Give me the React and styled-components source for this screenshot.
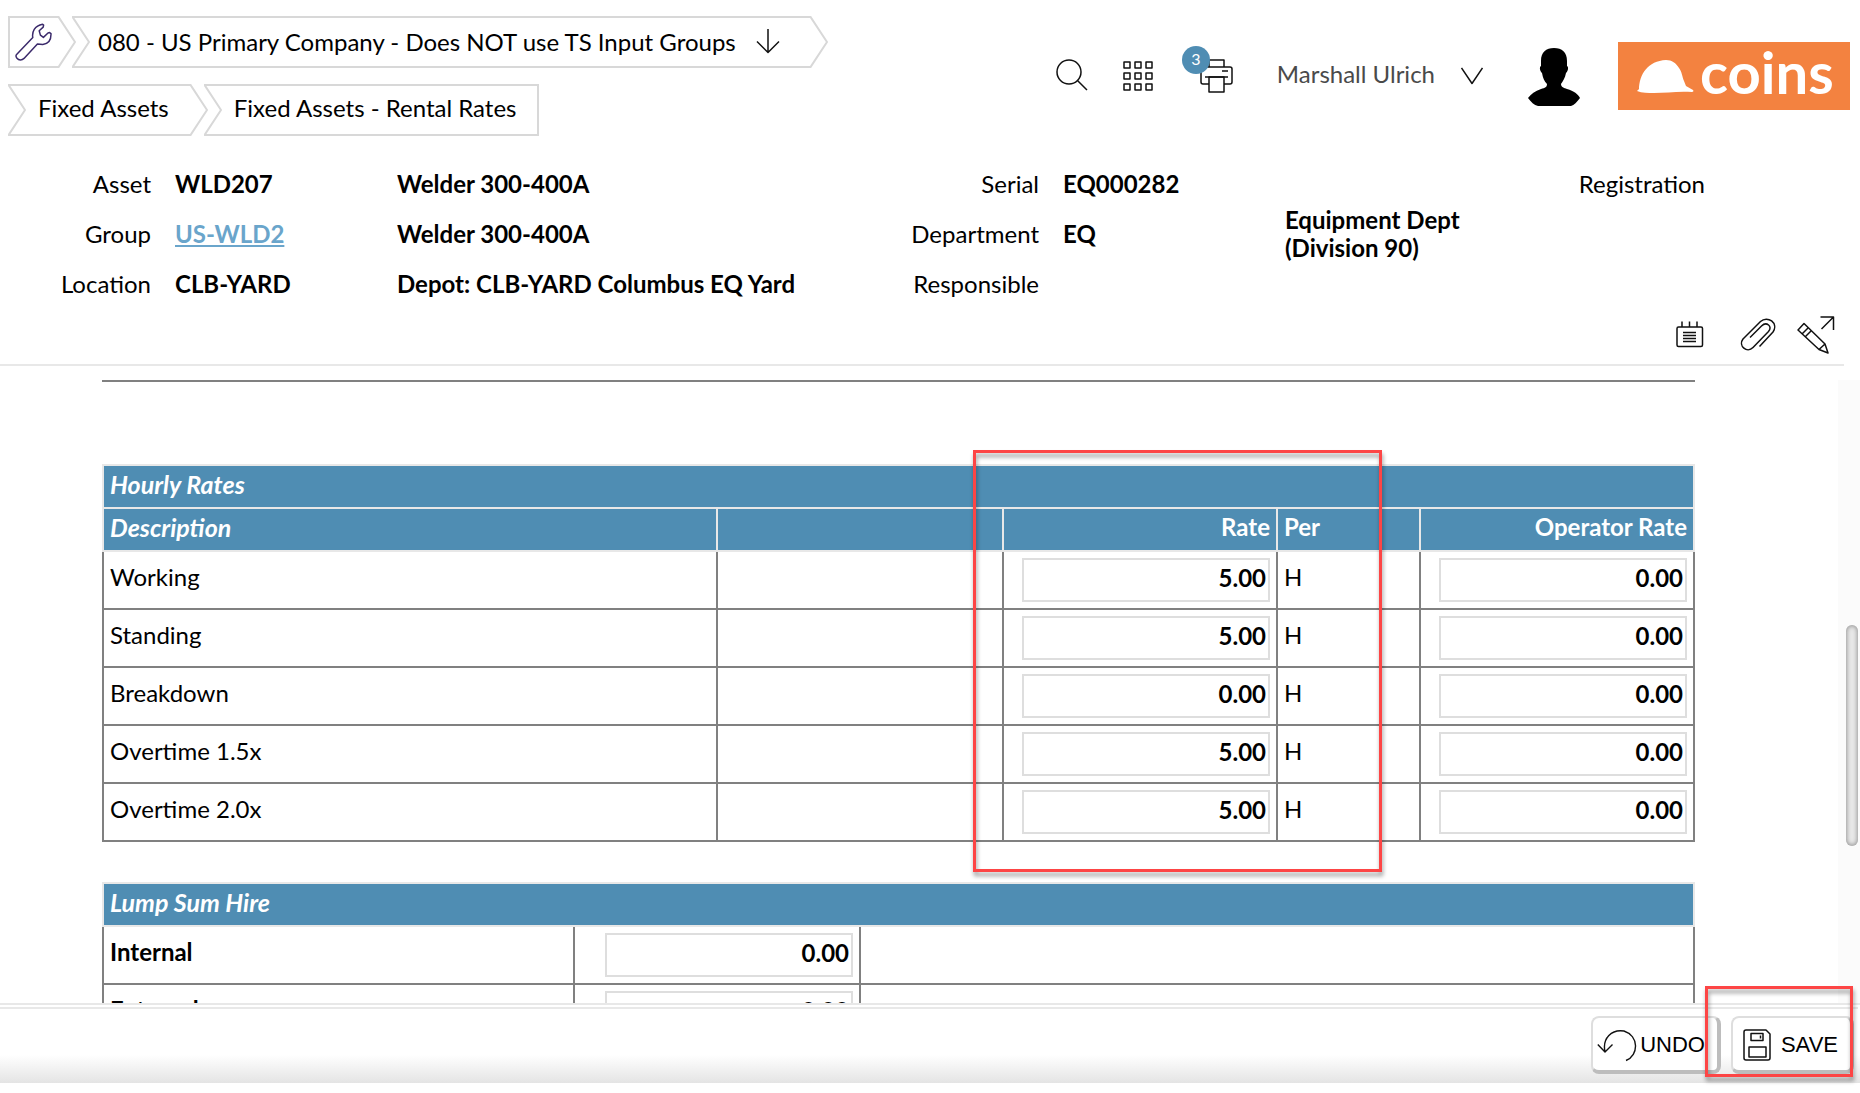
import React from "react";
import styled, { createGlobalStyle } from "styled-components";

const BLUE = "#4f8db3";
const LINE = "#e8e8e8";
const GRID = "#808080";

const GlobalStyle = createGlobalStyle`
  *, *::before, *::after { box-sizing: border-box; }
  body {
    margin: 0;
    background: #fff;
    color: #000;
    font-family: Lato, "Open Sans", sans-serif;
    font-size: 24px;
    line-height: 28px;
  }
  button, input { font: inherit; color: inherit; }
`;

const Shell = styled.div`
  display: flex;
  flex-direction: column;
  height: 100vh;
  padding-bottom: 10px;
`;

/* ---------- top bar ---------- */

const TopBar = styled.header`
  display: flex;
  justify-content: space-between;
  align-items: flex-start;
  padding: 16px 10px 0 8px;
`;

const Crumbs = styled.nav`
  display: flex;
  flex-direction: column;
  gap: 16px;
`;

const CrumbRow = styled.div`
  display: flex;
`;

const CrumbItem = styled.a`
  display: flex;
  height: 52px;
  color: inherit;
  text-decoration: none;
  & + & { margin-left: -4px; }
`;

const CrumbBody = styled.span`
  display: flex;
  align-items: center;
  gap: 20px;
  padding: ${(p) => p.$pad || "0"};
  border: solid #d8d8d8;
  border-width: 2px ${(p) => (p.$right ? "2px" : "0")} 2px ${(p) => (p.$left ? "2px" : "0")};
`;

const CapSvg = styled.svg`
  flex: none;
  width: 18px;
  height: 52px;
`;

const Cap = ({ start }) => (
  <CapSvg viewBox="0 0 18 52" fill="none" stroke="#d8d8d8" strokeWidth="2" aria-hidden="true">
    <path d={start ? "M18 1H0.6L17 26 0.6 51H18" : "M0 1h0.6L17 26 0.6 51H0"} />
  </CapSvg>
);

const Tools = styled.div`
  display: flex;
  align-items: center;
  padding-top: 26px;
`;

const IconButton = styled.button`
  display: flex;
  position: relative;
  padding: 0;
  border: 0;
  background: none;
  cursor: pointer;
  margin-right: ${(p) => p.$after || 0}px;
`;

const Badge = styled.span`
  position: absolute;
  left: -18px;
  top: -13px;
  width: 28px;
  height: 28px;
  border-radius: 50%;
  background: ${BLUE};
  color: #fff;
  font-size: 16px;
  line-height: 26px;
  text-align: center;
`;

const UserButton = styled.button`
  display: flex;
  align-items: center;
  gap: 26px;
  margin-right: 44px;
  padding: 0;
  border: 0;
  background: none;
  color: #4a4a4a;
  cursor: pointer;
`;

const UserName = styled.span`
  padding-bottom: 5px;
`;

const Avatar = styled.svg`
  width: 54px;
  height: 60px;
  margin-right: 37px;
`;

const Logo = styled.a`
  display: flex;
  align-items: center;
  gap: 6px;
  width: 232px;
  height: 68px;
  padding-left: 18px;
  background: #f38240;
  color: #fff;
  font-size: 58px;
  font-weight: 700;
  line-height: 56px;
  text-decoration: none;
`;

const LogoText = styled.span`
  padding-bottom: 8px;
`;

/* ---------- asset summary ---------- */

const Summary = styled.section`
  display: grid;
  grid-template-columns: 151fr 198fr 423fr 195fr 198fr 199fr 197fr 131fr;
  grid-auto-rows: 50px;
  column-gap: 24px;
  align-items: center;
  margin-top: 23px;
`;

const Label = styled.span`
  text-align: right;
`;

const Value = styled.span`
  font-weight: 700;
`;

const ValueLink = styled.a`
  color: #6aa5cb;
  font-weight: 700;
  text-decoration: underline;
`;

const PageActions = styled.div`
  display: flex;
  justify-content: flex-end;
  align-items: center;
  height: 57px;
  margin-right: 16px;
  padding: 0 9px 4px 0;
  border-bottom: 2px solid ${LINE};
`;

/* ---------- scrolling body ---------- */

const Scroller = styled.main`
  display: flex;
  flex: 1 1 0;
  min-height: 0;
  margin-top: 14px;
  overflow: hidden;
`;

const Content = styled.div`
  flex: 1;
  min-width: 0;
  padding: 0 143px 0 102px;
`;

const Rule = styled.hr`
  height: 2px;
  margin: 0 0 82px;
  border: 0;
  background: ${GRID};
`;

const Track = styled.div`
  display: grid;
  grid-template-rows: 245fr 221fr 157fr;
  width: 22px;
  padding: 0 2px 0 8px;
  background: #fbfbfb;
`;

const Thumb = styled.div`
  grid-row: 2;
  border-radius: 6px;
  background: #e8e8e8;
  box-shadow: inset 0 0 4px 1px #999;
`;

const TableWrap = styled.div`
  position: relative;
  margin-bottom: 40px;
`;

const Table = styled.table`
  width: 100%;
  table-layout: fixed;
  border-collapse: separate;
  border-spacing: 0;
  border-left: 2px solid ${GRID};
`;

const Th = styled.th`
  height: ${(p) => (p.$title ? 45 : 43)}px;
  padding: 4px 6px 9px;
  border: solid ${LINE};
  border-width: ${(p) => (p.$title ? "2px" : "0")} 2px 2px 0;
  background: ${BLUE};
  color: #fff;
  font-size: ${(p) => (p.$italic ? 25 : 24)}px;
  font-weight: 700;
  font-style: ${(p) => (p.$italic ? "italic" : "normal")};
  text-align: ${(p) => p.$align || "left"};
  vertical-align: top;
  &:first-child { box-shadow: -2px 0 0 ${LINE}; }
`;

const Td = styled.td`
  height: 58px;
  padding: 6px;
  border: solid ${GRID};
  border-width: 0 2px 2px 0;
  vertical-align: top;
`;

const TextTd = styled(Td)`
  padding-top: 11px;
  font-weight: ${(p) => (p.$bold ? 700 : 400)};
`;

const RateInput = styled.input`
  display: block;
  width: 248px;
  max-width: 100%;
  height: 44px;
  margin-left: auto;
  padding: 0 2px 6px;
  border: 2px solid #dedede;
  background: #fff;
  font-weight: 700;
  text-align: right;
`;

const Highlight = styled.div`
  position: absolute;
  border: 3px solid #fd4545;
  filter: drop-shadow(1px 4px 2px rgba(0, 0, 0, 0.4));
  pointer-events: none;
`;

const RatesHighlight = styled(Highlight)`
  left: calc(100% * 871 / 1593);
  width: calc(100% * 409 / 1593);
  top: -14px;
  bottom: -30px;
`;

/* ---------- footer ---------- */

const Footer = styled.footer`
  position: relative;
  display: flex;
  justify-content: flex-end;
  gap: 10px;
  height: 80px;
  padding: 11px 6px 0 0;
  border-top: 2px solid ${LINE};
  background: linear-gradient(to bottom, #fff 64%, #e4e4e4);
  &::before {
    content: "";
    position: absolute;
    inset: 2px 2px auto 0;
    height: 2px;
    background: ${LINE};
  }
`;

const ActionButton = styled.button`
  display: flex;
  align-items: center;
  gap: ${(p) => p.$gap}px;
  height: 58px;
  padding: 2px 12px 0 ${(p) => p.$start}px;
  border: solid #dedede;
  border-width: 2px 4px 4px 2px;
  border-right-color: #bdbdbd;
  border-bottom-color: #bdbdbd;
  border-radius: 8px;
  background: #fff;
  font-family: "Liberation Sans", Arial, sans-serif;
  font-size: 22px;
  cursor: pointer;
`;

const SaveHighlight = styled(Highlight)`
  right: 7px;
  width: 148px;
  top: -19px;
  height: 91px;
`;

/* ---------- icons ---------- */

const Icon = ({ w, h, sw = 1.4, color = "#111", children }) => (
  <svg width={w} height={h} viewBox={`0 0 ${w} ${h}`} fill="none" stroke={color} strokeWidth={sw} strokeLinejoin="round" aria-hidden="true">
    {children}
  </svg>
);

const Wrench = () => (
  <Icon w={38} h={38} sw={1.5} color="#3b2a6b">
    <path d="M1.6 31.4 17.8 14.6C16.8 9 19.4 2.6 27.6 1.2l1 .9-.4 2-4 3.6 1.2 4.4 3 2.3 4.6-4.4 1.6-.4 1.4 1c.2 6-2.6 10.3-8.2 11L22.4 20.9 9 35.4c-2 2-5.3 2-7-.1-1.1-1.3-1.3-2.7-.4-3.9Z" />
  </Icon>
);

const Search = () => (
  <Icon w={32} h={34} sw={1.5}>
    <circle cx="13" cy="13" r="12" />
    <path d="m21.500 21.500 9.500 9.500" />
  </Icon>
);

const Apps = () => (
  <Icon w={30} h={30} sw={1.5}>
    {[1, 12, 23].map((y) => [1, 12, 23].map((x) => <rect key={`${x}-${y}`} x={x} y={y} width="6" height="6" />))}
  </Icon>
);

const Printer = () => (
  <Icon w={34} h={34} sw={1.5}>
    <path d="M9 8V1h15v7M9 25H3q-2 0-2-2V10q0-2 2-2h27q2 0 2 2v13q0 2-2 2h-6M5 18h23M22 12h6" />
    <path d="M9 18h15v15H9z" />
  </Icon>
);

const Notepad = () => (
  <Icon w={28} h={28} sw={1.5}>
    <rect x="1" y="6" width="25.5" height="19.5" rx="1.5" />
    <path d="M6 .5v5.500M13.500 .5v5.500M21 .5v5.500M7 11.500h13M7 14.500h13M7 17.500h13M7 20.500h13" />
  </Icon>
);

const Clip = () => (
  <Icon w={36} h={34} sw={1.5}>
    <path d="M10 19.500 21.500 8c5-5 11.500.5 7 5.500L13 29.500c-6 6-15-1.500-10-8.500L20.500 3.500c7-6.500 18.500 1.500 12.500 10.500L19.500 28.500" />
  </Icon>
);

const Pencil = () => (
  <Icon w={38} h={38} sw={1.5}>
    <path d="m1 14 6-6.500 21 20.500 3 9-9-3.500ZM5 18l6.500-6.500M8 21l6.500-6.500M22 33.500l6-5.500M23.500 1h13v13M36.500 1l-12 12" />
  </Icon>
);

const Undo = () => (
  <Icon w={40} h={33}>
    <path d="M29 31.500C42 26 42 7 27 2 15 0 5 9 8 23M.8 15.500 8 23l7.500-7.500" />
  </Icon>
);

const Floppy = () => (
  <Icon w={28} h={32} sw={1.5}>
    <path d="M3 1h20l4 4v24q0 2-2 2H3q-2 0-2-2V3q0-2 2-2Z" />
    <path d="M8 4.500h12v7H8zM6 18h17v10H6zM17.500 6.500v3" />
  </Icon>
);

/* ---------- data ---------- */

const hourly = [
  { name: "Working", rate: "5.00", per: "H", operator: "0.00" },
  { name: "Standing", rate: "5.00", per: "H", operator: "0.00" },
  { name: "Breakdown", rate: "0.00", per: "H", operator: "0.00" },
  { name: "Overtime 1.5x", rate: "5.00", per: "H", operator: "0.00" },
  { name: "Overtime 2.0x", rate: "5.00", per: "H", operator: "0.00" },
];

const lumpSum = [
  { name: "Internal", rate: "0.00" },
  { name: "External", rate: "0.00" },
];

const Columns = ({ widths }) => {
  const total = widths.reduce((a, b) => a + b, 0);
  return (
    <colgroup>
      {widths.map((w, i) => (
        <col key={i} style={{ width: `${(w / total) * 100}%` }} />
      ))}
    </colgroup>
  );
};

export default function App() {
  return (
    <Shell>
      <GlobalStyle />
      <TopBar>
        <Crumbs aria-label="Breadcrumb">
          <CrumbRow>
            <CrumbItem href="#" aria-label="Settings">
              <CrumbBody $left $pad="0 5px"><Wrench /></CrumbBody>
              <Cap />
            </CrumbItem>
            <CrumbItem href="#">
              <Cap start />
              <CrumbBody $pad="0 30px 0 8px">
                080 - US Primary Company - Does NOT use TS Input Groups
                <Icon w={24} h={26} sw={1.5}><path d="M12 0v24M1 12.500 12 23.500 23 12.500" /></Icon>
              </CrumbBody>
              <Cap />
            </CrumbItem>
          </CrumbRow>
          <CrumbRow>
            <CrumbItem href="#">
              <Cap start />
              <CrumbBody $pad="0 21px 4px 12px">Fixed Assets</CrumbBody>
              <Cap />
            </CrumbItem>
            <CrumbItem href="#">
              <Cap start />
              <CrumbBody $right $pad="0 21px 4px 12px">Fixed Assets - Rental Rates</CrumbBody>
            </CrumbItem>
          </CrumbRow>
        </Crumbs>
        <Tools>
          <IconButton $after={35} aria-label="Search"><Search /></IconButton>
          <IconButton $after={47} aria-label="Applications"><Apps /></IconButton>
          <IconButton $after={43} aria-label="Print queue"><Printer /><Badge>3</Badge></IconButton>
          <UserButton>
            <UserName>Marshall Ulrich</UserName>
            <Icon w={22} h={18} sw={1.5}><path d="m.5 1 10.500 15.500L21.500 1" /></Icon>
          </UserButton>
          <Avatar viewBox="0 0 54 60" aria-hidden="true">
            <path d="M27 2c8 0 13 4 13 13v5c2 1 1 5-1 7-1 5-3 8-5 11 0 3 3 4 6 5 7 2 11 5 13 9-3 4-6 7-9 8H11c-4-1-7-4-10-8 3-4 7-7 13-9 4-1 6-2 6-5-3-3-4-6-5-11-2-2-3-6-1-7v-5C14 6 19 2 27 2Z" />
          </Avatar>
          <Logo href="#">
            <svg width="58" height="36" viewBox="0 0 58 36" fill="#fff" aria-hidden="true">
              <path d="M3 32C3 16 12 3 30 2c6 0 10 3 13 8 3 4 3 8 5 13l2 5 7 4c1 1 0 2-1 2-14-1-26 1-38 1-6 0-12 0-17-2l2-2Z" />
            </svg>
            <LogoText>coins</LogoText>
          </Logo>
        </Tools>
      </TopBar>

      <Summary>
        <Label>Asset</Label><Value>WLD207</Value><Value>Welder 300-400A</Value>
        <Label>Serial</Label><Value>EQ000282</Value><Value />
        <Label>Registration</Label><Value />
        <Label>Group</Label><span><ValueLink href="#">US-WLD2</ValueLink></span><Value>Welder 300-400A</Value>
        <Label>Department</Label><Value>EQ</Value><Value>Equipment Dept (Division 90)</Value>
        <Label /><Value />
        <Label>Location</Label><Value>CLB-YARD</Value><Value>Depot: CLB-YARD Columbus EQ Yard</Value>
        <Label>Responsible</Label><Value /><Value />
      </Summary>

      <PageActions>
        <IconButton $after={36} aria-label="Notes"><Notepad /></IconButton>
        <IconButton $after={21} aria-label="Attachments"><Clip /></IconButton>
        <IconButton aria-label="Edit"><Pencil /></IconButton>
      </PageActions>

      <Scroller>
        <Content>
          <Rule />
          <TableWrap>
            <Table>
              <Columns widths={[614, 286, 274, 143, 274]} />
              <thead>
                <tr><Th $title $italic colSpan={5}>Hourly Rates</Th></tr>
                <tr>
                  <Th $italic>Description</Th>
                  <Th />
                  <Th $align="right">Rate</Th>
                  <Th>Per</Th>
                  <Th $align="right">Operator Rate</Th>
                </tr>
              </thead>
              <tbody>
                {hourly.map((row) => (
                  <tr key={row.name}>
                    <TextTd>{row.name}</TextTd>
                    <Td />
                    <Td><RateInput defaultValue={row.rate} aria-label={`${row.name} rate`} /></Td>
                    <TextTd>{row.per}</TextTd>
                    <Td><RateInput defaultValue={row.operator} aria-label={`${row.name} operator rate`} /></Td>
                  </tr>
                ))}
              </tbody>
            </Table>
            <RatesHighlight />
          </TableWrap>
          <TableWrap>
            <Table>
              <Columns widths={[471, 286, 834]} />
              <thead>
                <tr><Th $title $italic colSpan={3}>Lump Sum Hire</Th></tr>
              </thead>
              <tbody>
                {lumpSum.map((row) => (
                  <tr key={row.name}>
                    <TextTd $bold>{row.name}</TextTd>
                    <Td><RateInput defaultValue={row.rate} aria-label={`${row.name} lump sum`} /></Td>
                    <Td />
                  </tr>
                ))}
              </tbody>
            </Table>
          </TableWrap>
        </Content>
        <Track><Thumb /></Track>
      </Scroller>

      <Footer>
        <ActionButton $gap={3} $start={4}><Undo />UNDO</ActionButton>
        <ActionButton $gap={10} $start={10}><Floppy />SAVE</ActionButton>
        <SaveHighlight />
      </Footer>
    </Shell>
  );
}
